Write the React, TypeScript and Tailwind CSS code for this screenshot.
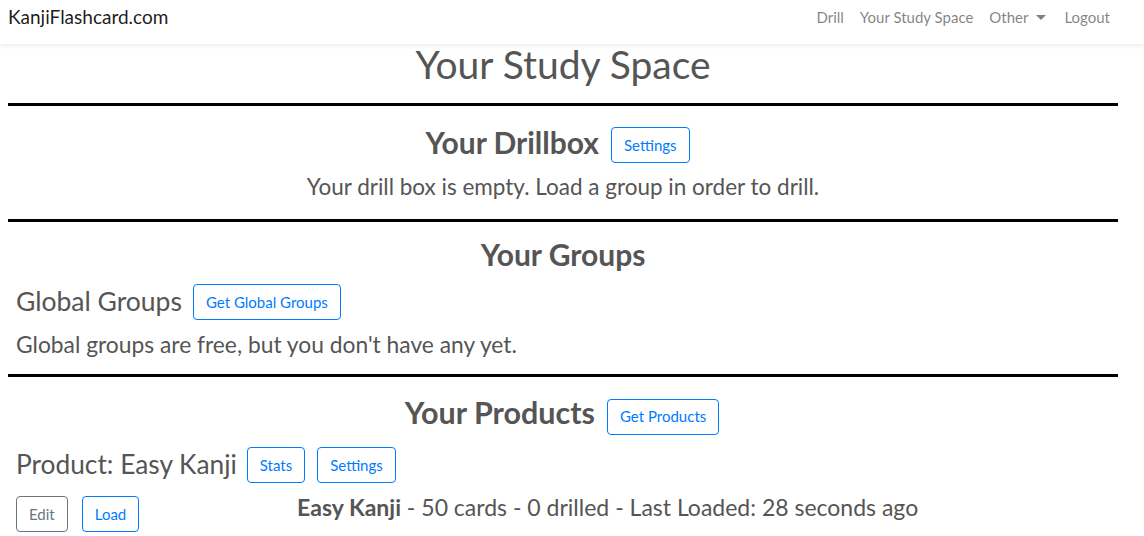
import React from "react";

/**
 * Study space page — static recreation.
 * Navbar, page title, then three sections split by heavy rules.
 */

const FONT = "font-['Lato','Open_Sans',sans-serif]";

export default function App() {
  return (
    <div className={`min-h-[536px] w-[1144px] bg-white text-[#555] ${FONT}`}>
      <NavBar />

      <main className="ml-2 w-[1110px]">
        <h1 className="h-[40px] text-center text-[39px] leading-[40px] font-normal">Your Study Space</h1>
        <Rule className="mt-[19px]" />

        <section className="pt-[21px]">
          <div className="flex h-[36px] items-center justify-center gap-3 pr-[11px]">
            <h2 className="-mt-[6px] text-[30px] leading-[36px] font-bold">Your Drillbox</h2>
            <OutlineBtn>Settings</OutlineBtn>
          </div>
          <p className="mt-[9px] text-center text-[22.5px] leading-[30px]">
            Your drill box is empty. Load a group in order to drill.
          </p>
        </section>
        <Rule className="mt-[17px]" />

        <section>
          <h2 className="mt-[15px] h-[34px] text-center text-[30px] leading-[34px] font-bold">Your Groups</h2>
          <div className="mt-[13px] flex h-[36px] items-center gap-[11px] pl-2">
            <h3 className="-mt-[2px] text-[26.5px] leading-[36px]">Global Groups</h3>
            <OutlineBtn>Get Global Groups</OutlineBtn>
          </div>
          <p className="mt-[9px] pl-2 text-[22.8px] leading-[30px]">
            Global groups are free, but you don't have any yet.
          </p>
        </section>
        <Rule className="mt-[15px]" />

        <section>
          <div className="mt-[22px] flex h-[35px] items-center justify-center gap-3 pr-[2px]">
            <h2 className="-mt-[8px] text-[30.5px] leading-[35px] font-bold">Your Products</h2>
            <OutlineBtn className="h-[35px]">Get Products</OutlineBtn>
          </div>
          <div className="mt-[13px] flex h-[36px] items-center pl-2">
            <h3 className="-mt-[2px] mr-[10px] text-[26.3px] leading-[36px]">Product: Easy Kanji</h3>
            <OutlineBtn>Stats</OutlineBtn>
            <OutlineBtn className="ml-3">Settings</OutlineBtn>
          </div>
          <div className="mt-[13px] flex items-start pl-2">
            <OutlineBtn variant="secondary">Edit</OutlineBtn>
            <OutlineBtn className="ml-[14px]">Load</OutlineBtn>
            <p className="flex-1 pr-[42px] text-center text-[23px] leading-[22px]">
              <span className="font-bold">Easy Kanji</span> - 50 cards - 0 drilled - Last Loaded: 28 seconds ago
            </p>
          </div>
        </section>
      </main>
    </div>
  );
}

function NavBar() {
  return (
    <nav className="flex h-[44px] items-start justify-between pt-[5px] pl-2 pr-[26px] shadow-[0_2px_4px_rgba(0,0,0,0.075)]">
      <a className="text-[19px] leading-[24px] text-black/90">KanjiFlashcard.com</a>
      <ul className="flex items-center text-[15px] leading-[24px] text-black/50">
        <li className="px-2">Drill</li>
        <li className="px-2">Your Study Space</li>
        <li className="flex items-center px-2">
          Other
          <span className="ml-[8px] h-0 w-0 border-x-[5px] border-t-[5px] border-x-transparent border-t-black/50" />
        </li>
        <li className="pl-[10px] pr-2">Logout</li>
      </ul>
    </nav>
  );
}

function Rule({ className = "" }: { className?: string }) {
  return <div className={`h-[3px] w-full bg-black ${className}`} />;
}

function OutlineBtn({
  children,
  className = "",
  variant = "primary",
}: {
  children: React.ReactNode;
  className?: string;
  variant?: "primary" | "secondary";
}) {
  const tone = variant === "primary" ? "border-[#007bff] text-[#007bff]" : "border-[#6c757d] text-[#6c757d]";
  return (
    <button
      type="button"
      className={`h-[36px] rounded border bg-white px-3 text-[15px] leading-none ${tone} ${className}`}
    >
      {children}
    </button>
  );
}
